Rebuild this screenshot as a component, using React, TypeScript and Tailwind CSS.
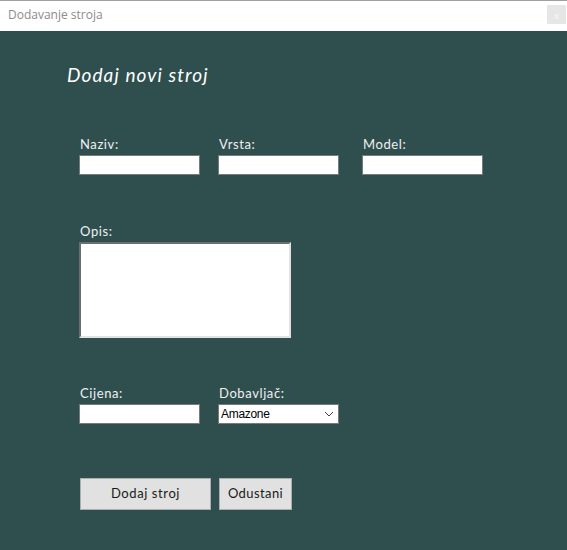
import React from 'react';

// polje s natpisom
function Field({ label, children, className }: { label: string; children: React.ReactNode; className?: string }) {
  return (
    <div className={className}>
      <div className="text-[13px] leading-[18px] tracking-[0.6px] text-[#f0f0f0] pl-[1px] mb-[2px]">{label}</div>
      {children}
    </div>
  );
}

const inputCls = 'block w-[121px] h-[20px] bg-white border border-[#7a7a7a]';

export default function App() {
  return (
    <div className="w-[567px] h-[550px] flex flex-col bg-[#2f4f4f] font-['Lato',sans-serif]">
      {/* naslovna traka */}
      <div className="h-[31px] shrink-0 bg-white border-t border-[#a0a0a0] flex items-center justify-between pl-[8px] pr-[1px]">
        <span className="text-[12px] text-[#8c8c8c] font-['Open_Sans',sans-serif] -mt-[2px]">Dodavanje stroja</span>
        <div className="w-[19px] h-[19px] bg-[#e6e6e6] flex items-center justify-center text-[10px] leading-none text-[#f8f8f8] -mt-[3px]">x</div>
      </div>

      <div className="flex flex-col pl-[79px]">
        <h1 className="-ml-[12px] mt-[32px] text-[19px] leading-[24px] italic tracking-[1.1px] text-white">Dodaj novi stroj</h1>

        <div className="flex mt-[48px]">
          <Field label="Naziv:" className="w-[139px]">
            <div className={inputCls} />
          </Field>
          <Field label="Vrsta:" className="w-[144px]">
            <div className={inputCls} />
          </Field>
          <Field label="Model:">
            <div className={inputCls} />
          </Field>
        </div>

        <Field label="Opis:" className="mt-[47px]">
          <div className="w-[212px] h-[96px] bg-white border-2 border-t-[#6d6d6d] border-l-[#6d6d6d] border-b-[#e3e3e3] border-r-[#e3e3e3]" />
        </Field>

        <div className="flex mt-[46px]">
          <Field label="Cijena:" className="w-[139px]">
            <div className={inputCls} />
          </Field>
          <Field label="Dobavljač:">
            <div className="w-[121px] h-[20px] bg-white border border-[#7a7a7a] flex items-center justify-between pl-[2px] pr-[4px]">
              <span className="text-[12px] leading-none text-black font-['Liberation_Sans',sans-serif] tracking-[-0.3px]">Amazone</span>
              <svg width="10" height="6" viewBox="0 0 10 6" fill="none" stroke="#444" strokeWidth="1">
                <path d="M1 1 L5 5 L9 1" />
              </svg>
            </div>
          </Field>
        </div>

        <div className="flex mt-[54px] pl-[1px] gap-[8px]">
          <button className="w-[131px] h-[32px] bg-[#e1e1e1] border border-[#adadad] text-[13px] tracking-[0.6px] text-[#1a1a1a]">Dodaj stroj</button>
          <button className="w-[73px] h-[32px] bg-[#e1e1e1] border border-[#adadad] text-[13px] tracking-[0.4px] text-[#1a1a1a]">Odustani</button>
        </div>
      </div>
    </div>
  );
}
